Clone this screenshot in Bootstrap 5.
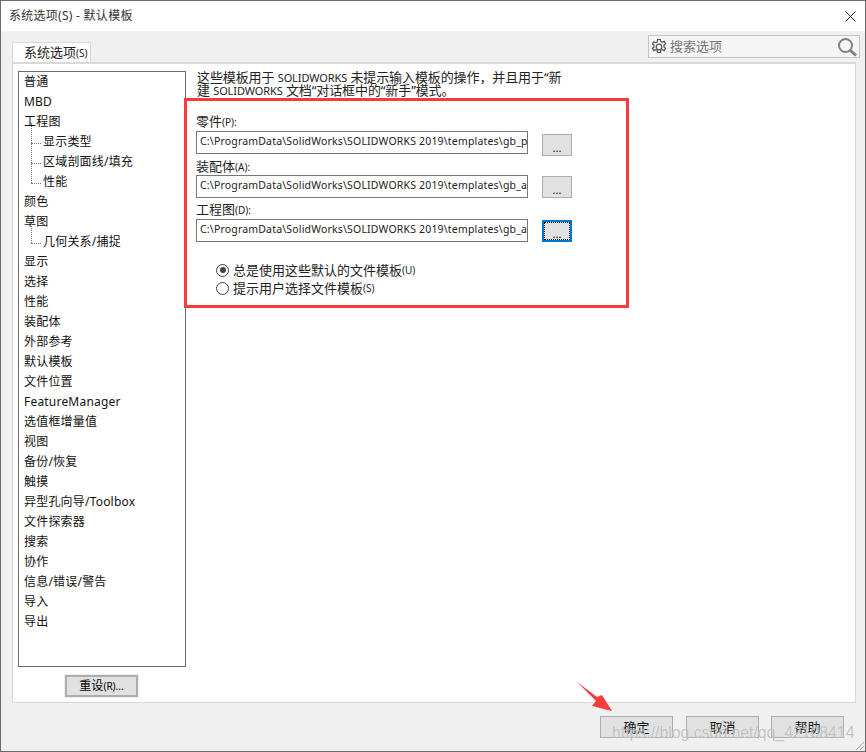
<!doctype html>
<html lang="zh"><head><meta charset="utf-8"><title>系统选项</title>
<link rel="stylesheet" href="https://cdn.jsdelivr.net/npm/bootstrap@5.3.0/dist/css/bootstrap.min.css">
<style>
html,body{margin:0;height:752px;overflow:hidden;background:#f0f0f0}
body,.form-control,.btn{font-family:"Noto Sans","Noto Sans CJK SC",sans-serif;font-size:12px;color:#000}
.win{width:866px;height:752px;position:relative;border:1px solid #6b6b6b;background:#f0f0f0}
.tbar{height:30px;background:#fff;padding-left:8px;line-height:29px;color:#333;font-size:12px;letter-spacing:.27px}
.xbtn{width:30px;height:30px}
.top{height:31px;padding:4px 5px 0 11px}
.tabx{width:79px;height:20px;background:#fff;border:1px solid #d9d9d9;border-bottom:0;padding-left:11px;font-size:13px;line-height:19px;margin-top:7px;color:#222}
.tabx i,.fl i,.rl i,.rst i{font-style:normal;font-size:10px}
.srch{width:212px;height:23px;background:#f5f5f5;border:1px solid #c4c4c4;padding:0 1px;color:#777;font-size:13px;line-height:20px}
.srch svg:first-child{margin-right:2px}
.srch span{padding-bottom:2px}
.pane{width:844px;height:641px;margin-left:11px;background:#fff;border:1px solid #d9d9d9;border-top-width:2px;padding:7px 5px 0 5px}
.treex{width:168px;height:596px;border:1px solid #6b6b6b;padding:1px 0 0 5px}
.ti{height:20px;line-height:18px;font-size:12px;color:#111;letter-spacing:.2px}
.ti.sub{padding-left:19px;position:relative}
.ti.sub::before{content:"";position:absolute;left:7px;top:-10px;height:20px;border-left:1px dotted #777}
.ti.sub::after{content:"";position:absolute;left:7px;top:10px;width:10px;border-top:1px dotted #777}
.rst{width:73px;height:22px;margin:8px 0 0 47px;padding:0;line-height:18px;background:#e1e1e1;border:2px solid #adadad;border-radius:0;font-size:12px;box-shadow:0 0 0 1px #f0f0f0}
.body{padding-left:10px;width:450px}
.desc{line-height:13px;font-size:13px;margin:0 0 0 1px;color:#222;width:400px;height:27px;white-space:nowrap;letter-spacing:-.1px}
.desc b{font-weight:400;font-size:11px}
.fl{font-size:13px;line-height:13px;height:13px;color:#222}
.rowx{width:376px}
.form-control.fld{width:332px;height:23px;border:1px solid #777;border-radius:0;padding:0 3px;font-size:10.5px;line-height:19px;color:#222;background:#fff;overflow:hidden;white-space:nowrap;font-family:"Noto Sans",sans-serif;min-height:0;letter-spacing:.18px}
.btn.dot{width:30px;height:22px;padding:5px 0 0;line-height:14px;background:#e1e1e1;border:1px solid #adadad;border-radius:0;font-size:11px;margin-left:14px}
.btn.dot.foc{border:2px solid #0078d7;outline:1px dotted #000;outline-offset:-3px}
.rl{font-size:13px;line-height:18px;height:18px;color:#222;padding-left:20px}
.rd{width:13px;height:13px;margin:0 4px 0 0;border:1px solid #444;border-radius:50%;background:#fff;flex:none;position:relative}
.rd.on::after{content:"";position:absolute;left:2.5px;top:2.5px;width:6px;height:6px;border-radius:50%;background:#444}
.foot{height:48px;padding:13px 21px 0 0}
.btn.act{width:73px;height:22px;padding:0;line-height:18px;background:#e1e1e1;border:1px solid #adadad;border-radius:0;font-size:13px;color:#111;margin-left:13px}
.btn.act:last-child{margin-left:12px}
.m3{margin-top:3px}.m1{margin-top:1px}.m2{margin-top:2px}
.gap17{margin-top:17px}.gap4{margin-top:4px}.gap5{margin-top:5px}.gap19{margin-top:19px}
.redbox{position:absolute;left:184px;top:98px;width:445px;height:210px;border:3px solid #f93b3b;pointer-events:none}
.arrow{position:absolute;left:575px;top:681px}
.wm{position:absolute;left:612px;top:723px;font-size:15.8px;line-height:20px;color:rgba(165,165,165,.65);text-shadow:0 0 1px rgba(255,255,255,.7);font-family:"Liberation Sans",sans-serif;white-space:nowrap}
.grip{position:absolute;right:0;bottom:0}
</style></head>
<body>
<div class="win d-flex flex-column">
  <div class="tbar d-flex justify-content-between">
    <span>系统选项(S) - 默认模板</span>
    <span class="xbtn d-flex align-items-center justify-content-center"><svg width="11" height="11" viewBox="0 0 11 11"><path d="M.5.5l10 10M10.500.5l-10 10" stroke="#222" stroke-width="1" fill="none"/></svg></span>
  </div>
  <div class="top d-flex justify-content-between align-items-start">
    <div class="tabx">系统选项<i>(S)</i></div>
    <div class="srch d-flex align-items-center">
      <svg width="18" height="18" viewBox="0 0 18 18" fill="none" stroke="#555" stroke-width="1.2"><circle cx="9" cy="9" r="2.8"/><path d="M7.600 1.500h2.800l.4 2.200 1.400.7 2-1 1.400 2.200-1.600 1.500v1.800l1.600 1.500-1.400 2.200-2-1-1.400.7-.4 2.200H7.600l-.4-2.200-1.400-.7-2 1-1.400-2.200 1.600-1.500V7.400L2.400 5.900l1.400-2.200 2 1 1.400-.7z"/></svg>
      <span>搜索选项</span>
      <svg width="21" height="20" viewBox="0 0 21 20" class="ms-auto" fill="none" stroke="#808080"><circle cx="8.500" cy="8.500" r="6.500" stroke-width="2"/><path d="M13.500 13.500l5.500 5" stroke-width="3"/></svg>
    </div>
  </div>
  <div class="pane d-flex align-items-start">
    <div>
      <div class="treex">
        <div class="ti">普通</div><div class="ti">MBD</div><div class="ti">工程图</div>
        <div class="ti sub">显示类型</div><div class="ti sub">区域剖面线/填充</div><div class="ti sub">性能</div>
        <div class="ti">颜色</div><div class="ti">草图</div><div class="ti sub">几何关系/捕捉</div>
        <div class="ti">显示</div><div class="ti">选择</div><div class="ti">性能</div><div class="ti">装配体</div><div class="ti">外部参考</div>
        <div class="ti">默认模板</div><div class="ti">文件位置</div><div class="ti">FeatureManager</div><div class="ti">选值框增量值</div>
        <div class="ti">视图</div><div class="ti">备份/恢复</div><div class="ti">触摸</div><div class="ti">异型孔向导/Toolbox</div>
        <div class="ti">文件探索器</div><div class="ti">搜索</div><div class="ti">协作</div><div class="ti">信息/错误/警告</div><div class="ti">导入</div><div class="ti">导出</div>
      </div>
      <button class="btn rst" type="button">重设<i>(R)...</i></button>
    </div>
    <div class="body">
      <p class="desc">这些模板用于 <b>SOLIDWORKS</b> 未提示输入模板的操作，并且用于“新<br>建 <b>SOLIDWORKS</b> 文档“对话框中的“新手”模式。</p>
      <div class="fl gap17">零件<i>(P):</i></div>
      <div class="rowx d-flex align-items-start m3">
        <div class="form-control fld">C:\ProgramData\SolidWorks\SOLIDWORKS 2019\templates\gb_part</div>
        <button class="btn dot m3" type="button">...</button>
      </div>
      <div class="fl gap4">装配体<i>(A):</i></div>
      <div class="rowx d-flex align-items-start m2">
        <div class="form-control fld">C:\ProgramData\SolidWorks\SOLIDWORKS 2019\templates\gb_assembly</div>
        <button class="btn dot m1" type="button">...</button>
      </div>
      <div class="fl gap5">工程图<i>(D):</i></div>
      <div class="rowx d-flex align-items-start m3">
        <div class="form-control fld">C:\ProgramData\SolidWorks\SOLIDWORKS 2019\templates\gb_assembly</div>
        <button class="btn dot foc m1" type="button">...</button>
      </div>
      <div class="rl d-flex align-items-center gap19"><span class="rd on"></span>总是使用这些默认的文件模板<i>(U)</i></div>
      <div class="rl d-flex align-items-center"><span class="rd"></span>提示用户选择文件模板<i>(S)</i></div>
    </div>
  </div>
  <div class="foot d-flex justify-content-end align-items-start">
    <button class="btn act" type="button">确定</button>
    <button class="btn act" type="button">取消</button>
    <button class="btn act" type="button">帮助</button>
  </div>
  <svg class="grip" width="12" height="12" viewBox="0 0 12 12"><path d="M11 3L3 11M11 7l-4 4" stroke="#aaa" fill="none"/></svg>
</div>
<div class="redbox"></div>
<svg class="arrow" width="40" height="32" viewBox="0 0 40 32"><path d="M2 1L22 16 27 14 37 30 17 25 21 20z" fill="#f93b3b"/></svg>
<div class="wm">https://blog.csdn.net/qq_42108414</div>
</body></html>
